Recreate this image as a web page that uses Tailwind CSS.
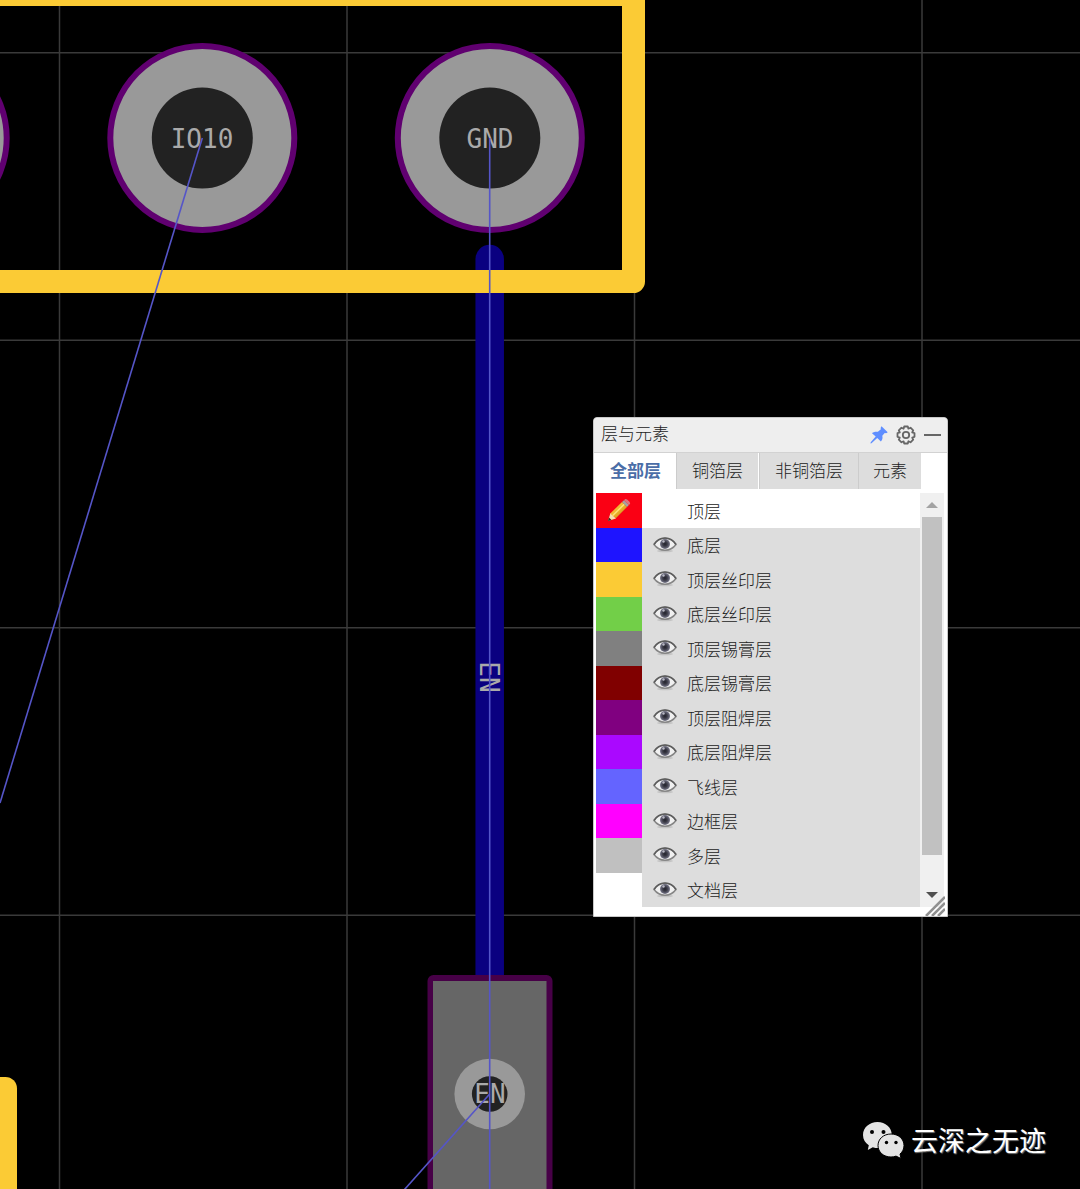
<!DOCTYPE html>
<html lang="zh-CN">
<head>
<meta charset="utf-8">
<meta name="viewport" content="width=device-width, initial-scale=1">
<title>层与元素</title>
<script src="https://cdn.jsdelivr.net/npm/@tailwindcss/browser@4"></script>
</head>
<body class="bg-black">
<svg class="absolute size-0" aria-hidden="true">
  <defs>
    <linearGradient id="wood" x1="0" y1="0" x2="1" y2="1"><stop offset="0" stop-color="#f8d24a"/><stop offset=".5" stop-color="#eeb42c"/><stop offset="1" stop-color="#b87412"/></linearGradient>
    <radialGradient id="iris"><stop offset="0" stop-color="#22222c"/><stop offset=".45" stop-color="#3c3c48"/><stop offset="1" stop-color="#77778a"/></radialGradient>
  </defs>
  <symbol id="eye" viewBox="0 0 24 16">
    <ellipse cx="12" cy="14" rx="8" ry="1.3" fill="#c4c4c4"/>
    <path d="M1 7.500C4 3 8 1.200 12 1.200S20 3 23 7.500C20 11.500 16 13.200 12 13.200S4 11.500 1 7.500Z" fill="#f0f0f0" stroke="#858585" stroke-width="1.500"/>
    <path d="M1 7.500C4 2.500 8 1 12 1S20 2.500 23 7.500" fill="none" stroke="#5c5c5c" stroke-width="1.500"/>
    <circle cx="12" cy="7" r="5" fill="url(#iris)"/>
    <circle cx="10.500" cy="4.500" r="1.200" fill="#b8b8c4"/>
  </symbol>
</svg>

<main class="relative min-h-screen overflow-hidden bg-black">
  <svg class="absolute inset-0 h-full w-full" role="img" aria-label="PCB">
    <g stroke="#3a3a3a" stroke-width="1.500">
      <line x1="59.500" x2="59.500" y1="0" y2="100%"/><line x1="347" x2="347" y1="0" y2="100%"/><line x1="634.500" x2="634.500" y1="0" y2="100%"/><line x1="922" x2="922" y1="0" y2="100%"/>
      <line y1="52.800" y2="52.800" x1="0" x2="100%"/><line y1="340.300" y2="340.300" x1="0" x2="100%"/><line y1="627.800" y2="627.800" x1="0" x2="100%"/><line y1="915.300" y2="915.300" x1="0" x2="100%"/>
    </g>
    <path d="M489.700 259V990" stroke="#0a0080" stroke-width="28.500" stroke-linecap="round"/>
    <g fill="#999" stroke="#600070" stroke-width="6">
      <circle cx="-85.300" cy="138" r="92"/><circle cx="202.300" cy="138" r="92"/><circle cx="489.800" cy="138" r="92"/>
    </g>
    <g fill="#222"><circle cx="202.300" cy="138" r="50.500"/><circle cx="489.800" cy="138" r="50.500"/></g>
    <path d="M-20-5.500H633.500V281.500H-20" fill="none" stroke="#fbcb35" stroke-width="23" stroke-linejoin="round"/>
    <rect x="-30" y="1077" width="47" height="200" rx="11.500" fill="#fbcb35"/>
    <rect x="427.500" y="975" width="125" height="300" rx="6" fill="#470047"/>
    <rect x="433" y="981" width="113.500" height="300" fill="#666"/>
    <circle cx="489.700" cy="1094" r="35.300" fill="#999"/><circle cx="489.700" cy="1094" r="17.800" fill="#222"/>
    <g class="font-['DejaVu_Sans_Mono',monospace] text-[26px]" fill="#aaa" text-anchor="middle">
      <text x="202" y="148">IO10</text>
      <text x="490" y="148">GND</text>
      <text x="490" y="1103">EN</text>
      <text transform="translate(480 677) rotate(90)">EN</text>
    </g>
    <g fill="none" stroke="#5555c8" stroke-width="1.600">
      <path d="M489.700 138V1300"/><path d="M202.300 138L0 803"/><path d="M489.700 1094L388 1208"/>
    </g>
  </svg>

  <section class="absolute top-[417px] left-[593px] flex w-[355px] flex-col rounded-t border border-[#c8c8c8] bg-white font-['Noto_Sans_CJK_SC',sans-serif] text-[17px] font-light text-[#222]" aria-label="层与元素">
    <header class="flex h-[35px] items-center rounded-t border-b border-[#d2d2d2] bg-[#eee] pr-[5px] pl-[7px]">
      <h1 class="flex-1 pb-1 leading-6">层与元素</h1>
      <div class="flex items-center gap-2">
        <button type="button" aria-label="固定"><svg class="size-[18px]" viewBox="0 0 18 18" fill="#5f8eff"><path d="M11.500.3 17.700 6.200C16.800 7.300 15.700 7.300 14.700 7L12.300 9.800C12.900 12.200 12.300 14.200 10.900 15.500L7.200 12 1.500 17.200.5 17.500.7 16.300 5.700 10.600 2 7.200C3.500 5.800 5.500 5.400 7.900 5.800L10.900 3.300C10.500 2.300 10.700 1.200 11.500.3Z"/></svg></button>
        <button type="button" aria-label="设置"><svg class="size-5" viewBox="0 0 20 20" fill="none" stroke="#666" stroke-width="1.800" stroke-linejoin="round"><path d="M8.200 1.500h3.600l.6 2.200 2.100-1 2.700 2.700-1 2.100 2.300.7v3.600l-2.300.7 1 2.100-2.700 2.700-2.100-1-.6 2.200H8.200l-.6-2.200-2.100 1-2.700-2.700 1-2.100-2.300-.7V8.200l2.300-.7-1-2.100 2.700-2.700 2.100 1Z"/><circle cx="10" cy="10" r="3.200"/></svg></button>
        <button type="button" aria-label="最小化"><svg class="h-5 w-[18px]" viewBox="0 0 18 20"><path d="M0 10H17" stroke="#666" stroke-width="2"/></svg></button>
      </div>
    </header>

    <nav class="flex h-9 pl-px" role="tablist">
      <button type="button" role="tab" aria-selected="true" class="px-[15px] pb-[3px] font-bold text-[#4a6da7]">全部层</button>
      <button type="button" role="tab" class="border-l border-[#ccc] bg-[#ddd] px-[15px] pb-[3px]">铜箔层</button>
      <button type="button" role="tab" class="ml-px border-l border-[#ccc] bg-[#ddd] px-[15px] pb-[3px]">非铜箔层</button>
      <button type="button" role="tab" class="border-l border-[#ccc] bg-[#ddd] px-[14px] pb-[3px]">元素</button>
    </nav>

    <div class="mt-1 mb-[9px] flex pr-[3px] pl-0.5">
      <ul class="grid h-[414px] flex-1 grid-rows-12">
        <li class="flex"><span class="flex w-[46px] items-center justify-center bg-[#fa0014]"><svg class="size-6" viewBox="0 0 24 24"><path d="M1 23 3.500 15 9 20.500Z" fill="#f5dfb0"/><path d="M1 23 2 19.600 4.500 22Z" fill="#3c2418"/><path d="M3.300 15.500 15 4 20 9 8.800 20.300Z" fill="url(#wood)"/><path d="M5.500 17.800 17.200 6.300" stroke="#ffe277" stroke-width="1.500"/><path d="M15 4 17 2.200 21.800 7 20 9Z" fill="#a3a3a3"/><path d="M17 2.200 18.300 1C19.500.3 24 4.500 23 6L21.800 7Z" fill="#dd7480"/></svg></span><span class="flex flex-1 items-center pl-[45px]">顶层</span></li>
        <li class="flex bg-[#ddd]"><span class="w-[46px] bg-[#1e14ff]"></span><button type="button" aria-label="显示底层" class="mr-2.5 ml-[11px]"><svg class="h-4 w-6"><use href="#eye"/></svg></button><span class="self-center">底层</span></li>
        <li class="flex bg-[#ddd]"><span class="w-[46px] bg-[#fbcb35]"></span><button type="button" aria-label="显示顶层丝印层" class="mr-2.5 ml-[11px]"><svg class="h-4 w-6"><use href="#eye"/></svg></button><span class="self-center">顶层丝印层</span></li>
        <li class="flex bg-[#ddd]"><span class="w-[46px] bg-[#72cf48]"></span><button type="button" aria-label="显示底层丝印层" class="mr-2.5 ml-[11px]"><svg class="h-4 w-6"><use href="#eye"/></svg></button><span class="self-center">底层丝印层</span></li>
        <li class="flex bg-[#ddd]"><span class="w-[46px] bg-[#808080]"></span><button type="button" aria-label="显示顶层锡膏层" class="mr-2.5 ml-[11px]"><svg class="h-4 w-6"><use href="#eye"/></svg></button><span class="self-center">顶层锡膏层</span></li>
        <li class="flex bg-[#ddd]"><span class="w-[46px] bg-[#800000]"></span><button type="button" aria-label="显示底层锡膏层" class="mr-2.5 ml-[11px]"><svg class="h-4 w-6"><use href="#eye"/></svg></button><span class="self-center">底层锡膏层</span></li>
        <li class="flex bg-[#ddd]"><span class="w-[46px] bg-[#800080]"></span><button type="button" aria-label="显示顶层阻焊层" class="mr-2.5 ml-[11px]"><svg class="h-4 w-6"><use href="#eye"/></svg></button><span class="self-center">顶层阻焊层</span></li>
        <li class="flex bg-[#ddd]"><span class="w-[46px] bg-[#aa08ff]"></span><button type="button" aria-label="显示底层阻焊层" class="mr-2.5 ml-[11px]"><svg class="h-4 w-6"><use href="#eye"/></svg></button><span class="self-center">底层阻焊层</span></li>
        <li class="flex bg-[#ddd]"><span class="w-[46px] bg-[#6464ff]"></span><button type="button" aria-label="显示飞线层" class="mr-2.5 ml-[11px]"><svg class="h-4 w-6"><use href="#eye"/></svg></button><span class="self-center">飞线层</span></li>
        <li class="flex bg-[#ddd]"><span class="w-[46px] bg-[#ff00ff]"></span><button type="button" aria-label="显示边框层" class="mr-2.5 ml-[11px]"><svg class="h-4 w-6"><use href="#eye"/></svg></button><span class="self-center">边框层</span></li>
        <li class="flex bg-[#ddd]"><span class="w-[46px] bg-[#c0c0c0]"></span><button type="button" aria-label="显示多层" class="mr-2.5 ml-[11px]"><svg class="h-4 w-6"><use href="#eye"/></svg></button><span class="self-center">多层</span></li>
        <li class="flex bg-[#ddd]"><span class="w-[46px] bg-white"></span><button type="button" aria-label="显示文档层" class="mr-2.5 ml-[11px]"><svg class="h-4 w-6"><use href="#eye"/></svg></button><span class="self-center">文档层</span></li>
      </ul>
      <div class="flex w-6 flex-col items-center bg-[#f0f0f0]">
        <button type="button" aria-label="向上滚动" class="flex h-6 w-full items-center justify-center"><svg class="h-1.5 w-3" viewBox="0 0 12 6"><path d="M0 6 6 0 12 6Z" fill="#a3a3a3"/></svg></button>
        <div class="h-[338px] w-5 bg-[#c1c1c1]"></div>
        <button type="button" aria-label="向下滚动" class="mt-auto flex h-6 w-full items-center justify-center"><svg class="h-1.5 w-3" viewBox="0 0 12 6"><path d="M0 0 6 6 12 0Z" fill="#505050"/></svg></button>
      </div>
    </div>
    <svg class="absolute right-0.5 bottom-0 size-5 cursor-se-resize" viewBox="0 0 20 20" stroke="#909090" stroke-width="2.500"><path d="M1 20 20 1M7 20 20 7M13 20 20 13"/></svg>
  </section>

  <div class="absolute top-[1120px] left-[863px] flex items-center gap-[7px]">
    <svg class="h-[38px] w-[41px]" viewBox="0 0 41 38" aria-hidden="true">
      <path d="M14.500 1C6.500 1 0 6.500 0 14c0 4.500 2.300 8 5.800 10.300L4.800 29l5-2.800c9 3 19-2.200 19-12.200C28.800 6.500 22.500 1 14.500 1Z" fill="#e4e4e4"/>
      <path d="M28 13C20.500 13 15 18 15 24.500S20.500 36 28 36c1.800 0 3.500-.3 5-.9L38 37.500 37 33c2.500-2 4-5 4-8.500C41 18 35.500 13 28 13Z" fill="#e4e4e4" stroke="#000" stroke-width="1"/>
      <g fill="#000"><circle cx="9" cy="11" r="2"/><circle cx="20.500" cy="11" r="2"/><circle cx="23.500" cy="21.500" r="1.700"/><circle cx="33" cy="21.500" r="1.700"/></g>
    </svg>
    <span class="font-['Noto_Sans_CJK_SC',sans-serif] text-[27px] leading-10 text-white [text-shadow:1px_1px_1px_#777]">云深之无迹</span>
  </div>
</main>
</body>
</html>
